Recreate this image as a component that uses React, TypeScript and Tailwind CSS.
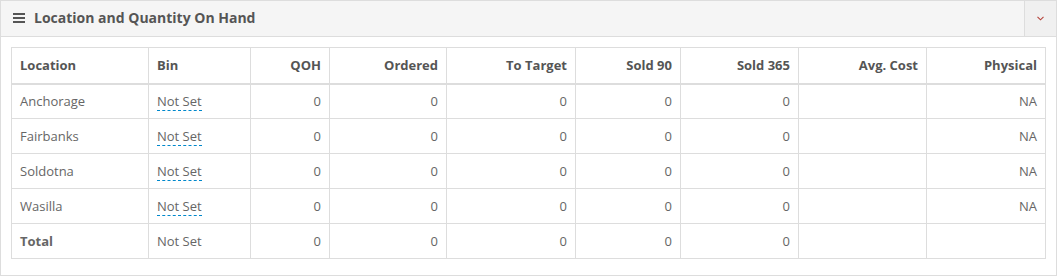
import React from "react";

interface Row {
  location: string;
  bin: string;
  qoh: number;
  ordered: number;
  toTarget: number;
  sold90: number;
  sold365: number;
  avgCost: string;
  physical: string;
}

const rows: Row[] = [
  { location: "Anchorage", bin: "Not Set", qoh: 0, ordered: 0, toTarget: 0, sold90: 0, sold365: 0, avgCost: "", physical: "NA" },
  { location: "Fairbanks", bin: "Not Set", qoh: 0, ordered: 0, toTarget: 0, sold90: 0, sold365: 0, avgCost: "", physical: "NA" },
  { location: "Soldotna", bin: "Not Set", qoh: 0, ordered: 0, toTarget: 0, sold90: 0, sold365: 0, avgCost: "", physical: "NA" },
  { location: "Wasilla", bin: "Not Set", qoh: 0, ordered: 0, toTarget: 0, sold90: 0, sold365: 0, avgCost: "", physical: "NA" },
];

const th = "border border-[#ddd] border-b-2 px-2 font-bold text-[#555]";
const td = "border border-[#ddd] px-2 text-[#666]";

export default function App() {
  return (
    <div className="w-[1057px] h-[276px] bg-white font-['Open_Sans',sans-serif] text-[13px]">
      <div className="border border-[#ddd] h-[276px] flex flex-col">
        {/* Panel heading */}
        <div className="h-[36px] flex items-stretch bg-[#f5f5f5] border-b border-[#ddd]">
          <div className="flex-1 flex items-center pl-[12px] pb-[2px] gap-[9px]">
            <svg width="12" height="10" viewBox="0 0 12 10" className="text-[#555]">
              <rect x="0" y="0" width="12" height="2" fill="currentColor" />
              <rect x="0" y="4" width="12" height="2" fill="currentColor" />
              <rect x="0" y="8" width="12" height="2" fill="currentColor" />
            </svg>
            <span className="text-[14px] font-bold text-[#555]">Location and Quantity On Hand</span>
          </div>
          <button className="w-[32px] border-l border-[#ddd] bg-[#f0f0f0] flex items-center justify-center">
            <svg width="7" height="5" viewBox="0 0 7 5">
              <path d="M0.5 0.8 L3.5 3.8 L6.5 0.8" fill="none" stroke="#b5433a" strokeWidth="1.1" />
            </svg>
          </button>
        </div>

        {/* Panel body */}
        <div className="px-[10px] pt-[10px]">
          <table className="table-fixed border-collapse w-[1034px] leading-[18px]">
            <colgroup>
              <col className="w-[137px]" />
              <col className="w-[102px]" />
              <col className="w-[79px]" />
              <col className="w-[117px]" />
              <col className="w-[129px]" />
              <col className="w-[105px]" />
              <col className="w-[118px]" />
              <col className="w-[128px]" />
              <col className="w-[119px]" />
            </colgroup>
            <thead>
              <tr className="h-[36px]">
                <th className={`${th} text-left`}>Location</th>
                <th className={`${th} text-left`}>Bin</th>
                <th className={`${th} text-right`}>QOH</th>
                <th className={`${th} text-right`}>Ordered</th>
                <th className={`${th} text-right`}>To Target</th>
                <th className={`${th} text-right`}>Sold 90</th>
                <th className={`${th} text-right`}>Sold 365</th>
                <th className={`${th} text-right`}>Avg. Cost</th>
                <th className={`${th} text-right`}>Physical</th>
              </tr>
            </thead>
            <tbody>
              {rows.map((r) => (
                <tr key={r.location} className="h-[35px]">
                  <td className={td}>{r.location}</td>
                  <td className={td}>
                    <span className="border-b border-dashed border-[#0088cc]">{r.bin}</span>
                  </td>
                  <td className={`${td} text-right`}>{r.qoh}</td>
                  <td className={`${td} text-right`}>{r.ordered}</td>
                  <td className={`${td} text-right`}>{r.toTarget}</td>
                  <td className={`${td} text-right`}>{r.sold90}</td>
                  <td className={`${td} text-right`}>{r.sold365}</td>
                  <td className={`${td} text-right`}>{r.avgCost}</td>
                  <td className={`${td} text-right`}>{r.physical}</td>
                </tr>
              ))}
              <tr className="h-[35px]">
                <td className={`${td} font-bold text-[#555]`}>Total</td>
                <td className={td}>Not Set</td>
                <td className={`${td} text-right`}>0</td>
                <td className={`${td} text-right`}>0</td>
                <td className={`${td} text-right`}>0</td>
                <td className={`${td} text-right`}>0</td>
                <td className={`${td} text-right`}>0</td>
                <td className={td}></td>
                <td className={td}></td>
              </tr>
            </tbody>
          </table>
        </div>
      </div>
    </div>
  );
}
